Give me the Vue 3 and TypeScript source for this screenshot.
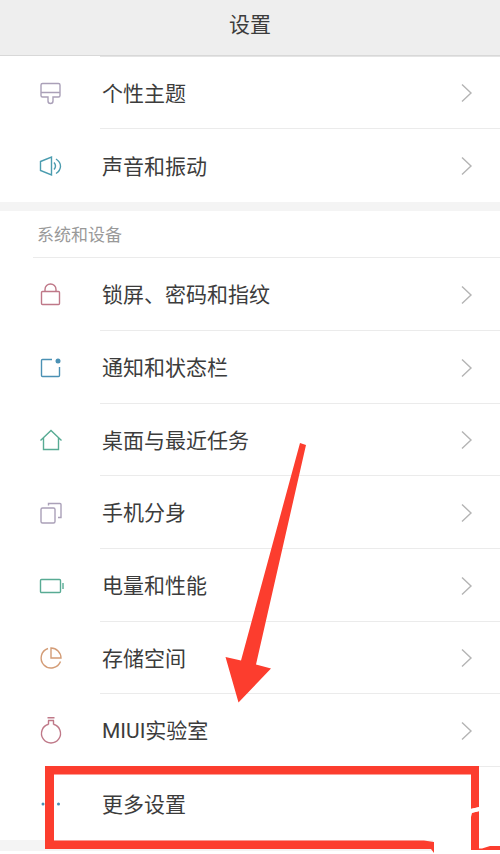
<script setup lang="ts">
interface Item {
  id: string
  label: string
}

interface Group {
  id: string
  title?: string
  items: Item[]
}

const groups: Group[] = [
  {
    id: 'personal',
    items: [
      { id: 'theme', label: '个性主题' },
      { id: 'sound', label: '声音和振动' },
    ],
  },
  {
    id: 'system',
    title: '系统和设备',
    items: [
      { id: 'lock', label: '锁屏、密码和指纹' },
      { id: 'notice', label: '通知和状态栏' },
      { id: 'home', label: '桌面与最近任务' },
      { id: 'clone', label: '手机分身' },
      { id: 'battery', label: '电量和性能' },
      { id: 'storage', label: '存储空间' },
      { id: 'lab', label: 'MIUI实验室' },
      { id: 'more', label: '更多设置' },
    ],
  },
]
</script>

<template>
  <div class="page">
    <header class="bar">
      <h1>设置</h1>
    </header>
    <main>
      <section v-for="group in groups" :key="group.id" class="group" :class="group.id">
        <h2 v-if="group.title">{{ group.title }}</h2>
        <ul>
          <li v-for="item in group.items" :key="item.id">
            <a :href="'#' + item.id">
              <svg class="icon" :class="item.id" viewBox="0 0 28 28" stroke-width="1.4" aria-hidden="true">
                <template v-if="item.id === 'theme'">
                  <path d="M6.5 4.500h16q1.500 0 1.500 1.500v10.500q0 1.500-1.500 1.500H17v4q0 2.500-2.500 2.500T12 22v-4H6.500Q5 18 5 16.500V6q0-1.500 1.500-1.500zM5 13.500h19" />
                </template>
                <template v-else-if="item.id === 'sound'">
                  <path d="M4.500 9.500 15.500 5v18L4.500 18.500zM18 10.500q3 3.500 0 7M20 7c6 4 6 10.500 0 14.500" />
                </template>
                <template v-else-if="item.id === 'lock'">
                  <rect x="5.5" y="10.5" width="18" height="13" rx="1" />
                  <path d="M9 10.500V8.500a5.500 5.500 0 0 1 11 0v2" />
                </template>
                <template v-else-if="item.id === 'notice'">
                  <path d="M16 5.500H6.500q-1 0-1 1v15q0 1 1 1h16q1 0 1-1V13" />
                  <circle class="solid" cx="22" cy="7" r="2.5" />
                </template>
                <template v-else-if="item.id === 'home'">
                  <path d="M4.500 14.500 15 4.500 25.500 14.500M7.500 12v11.500h15V12" />
                </template>
                <template v-else-if="item.id === 'clone'">
                  <rect x="5" y="9" width="14" height="15" rx="1.5" />
                  <path d="M12.500 6.500v-2H24q1 0 1 1v13h-3" />
                </template>
                <template v-else-if="item.id === 'battery'">
                  <rect x="4.5" y="7.5" width="20" height="13" rx="1" />
                  <path d="M27 11v6" />
                </template>
                <template v-else-if="item.id === 'storage'">
                  <path d="M12 4.500A10 10 0 1 0 24.500 17.500M15 4V14H25A10 10 0 0 0 15 4z" />
                </template>
                <template v-else-if="item.id === 'lab'">
                  <path d="M11.500 .7h7M12 3.500h6M12.500 3.500V7.500M17.500 3.500V7.500M12.500 7.300a9.500 9.500 0 1 0 5 0" />
                </template>
                <template v-else>
                  <circle class="solid" cx="7" cy="14" r="1.5" />
                  <circle class="solid" cx="15" cy="14" r="1.5" />
                  <circle class="solid" cx="22.5" cy="14" r="1.5" />
                </template>
              </svg>
              <span class="label">{{ item.label }}</span>
              <svg v-if="item.id !== 'more'" class="chevron" viewBox="0 0 12 20" stroke-width="1.4" aria-hidden="true">
                <path d="M1 1.500 10 10 1 18.500" />
              </svg>
            </a>
          </li>
        </ul>
      </section>
    </main>
    <svg class="marks" viewBox="0 0 500 854" aria-hidden="true">
      <path class="wash" d="M433 838h67v16h-67z" />
      <path d="M300 443 306 445 256 664.500 271 668.500 238.500 702.500 225.500 657 241 660.500z" />
      <path d="M45 766H479V807L471 809V774.500H54V840.500H424L434 842V853L431 849H45z" />
      <path d="M472 813 479 811V848.500H482L490 846H500V850H471V817z" />
      <path class="wash" d="M470 809 480 807V811L470 813z" />
    </svg>
  </div>
</template>

<style>
body {
  margin: 0;
  background: #fff;
}
</style>

<style scoped>
.page {
  position: relative;
  min-height: 100vh;
  box-sizing: border-box;
  overflow: hidden;
  background: #fff;
  color: #3c3c3c;
  font-family: Roboto, "Noto Sans CJK SC", sans-serif;
}

.bar {
  display: flex;
  align-items: center;
  justify-content: center;
  height: 56px;
  padding-bottom: 6px;
  box-sizing: border-box;
  border-bottom: 1px solid #d8d8d8;
  background: #eee;
}

h1 {
  margin: 0;
  font-size: 21px;
  line-height: 30px;
  font-weight: 400;
}

h2 {
  height: 47px;
  margin: 0 0 0 33px;
  padding-left: 4px;
  box-sizing: border-box;
  border-bottom: 1px solid #ebebeb;
  color: #999;
  font-size: 17px;
  line-height: 48px;
  font-weight: 400;
}

ul {
  margin: 0;
  padding: 0;
  list-style: none;
}

.group {
  border-bottom: 9px solid #f4f4f4;
}

.system {
  border-bottom-width: 11px;
}

.personal li:first-child .label {
  border-top: 1px solid #e4e4e4;
}

li {
  height: 73px;
}

li:nth-child(3n) {
  height: 72px;
}

a {
  display: flex;
  align-items: center;
  height: 100%;
  padding-left: 36px;
  color: inherit;
  text-decoration: none;
  position: relative;
}

.icon {
  flex: none;
  width: 28px;
  height: 28px;
  margin-right: 36px;
  fill: none;
  stroke: currentColor;
}

.solid {
  fill: currentColor;
  stroke: none;
}

.label {
  display: flex;
  align-items: center;
  flex: 1;
  height: 100%;
  padding: 0 0 2px 2px;
  box-sizing: border-box;
  border-bottom: 1px solid #ebebeb;
  font-size: 21px;
  font-weight: 400;
}

li:last-child .label {
  border-bottom: 0;
}

.chevron {
  position: absolute;
  right: 27px;
  width: 12px;
  height: 20px;
  fill: none;
  stroke: #b4b4b4;
}

.theme,
.clone {
  color: #aaa0b8;
}

.sound {
  color: #4b9caf;
}

.lock,
.lab {
  color: #bf7888;
}

.notice,
.more {
  color: #4b91b4;
}

.home,
.battery {
  color: #58ab94;
}

.storage {
  color: #d39c76;
}

.marks {
  position: absolute;
  top: 0;
  left: 0;
  width: 100%;
  max-width: 500px;
  fill: #fc3d2e;
  pointer-events: none;
}

.marks .wash {
  fill: #fff;
}
</style>
